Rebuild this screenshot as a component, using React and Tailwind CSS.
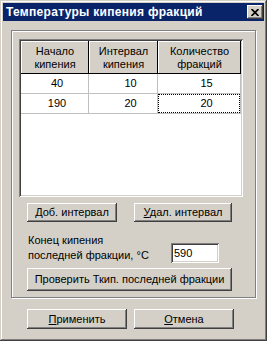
import React from 'react';

const raised =
  'shadow-[inset_-1px_-1px_#404040,inset_1px_1px_#ffffff,inset_-2px_-2px_#808080,inset_2px_2px_#d4d0c8]';
const headerCell =
  'shadow-[inset_-1px_-1px_#000000,inset_1px_1px_#ffffff] flex flex-col items-center justify-center leading-[13px]';

const WinButton = ({ className, children }) => (
  <button
    className={`${raised} bg-[#d4d0c8] flex items-center justify-center text-black text-[11px] ${className}`}
  >
    {children}
  </button>
);

const rows = [
  ['40', '10', '15'],
  ['190', '20', '20'],
];

const App = () => {
  return (
    <div className="w-[267px] h-[341px] bg-[#d4d0c8] p-[3px] flex flex-col text-[11px] text-black font-['Liberation_Sans',Arial,sans-serif] shadow-[inset_-1px_-1px_#404040,inset_1px_1px_#d4d0c8,inset_-2px_-2px_#808080,inset_2px_2px_#ffffff]">
      {/* Title bar */}
      <div className="h-[18px] bg-[#0a246a] flex items-center justify-between pl-[3px] pr-[1px]">
        <span className="text-white font-bold text-[12px] tracking-[0.3px]">Температуры кипения фракций</span>
        <div className={`${raised} bg-[#d4d0c8] w-[16px] h-[14px] flex items-center justify-center`}>
          <svg width="8" height="7" viewBox="0 0 8 7">
            <path d="M0.5 0 L7.5 7 M7.5 0 L0.5 7" stroke="#000" strokeWidth="1.7" />
          </svg>
        </div>
      </div>

      <div className="flex flex-col px-[8px]">
        {/* Group frame */}
        <div className="mt-[9px] w-[245px] h-[268px] border border-[#808080] shadow-[inset_1px_1px_#ffffff,1px_1px_#ffffff] pl-[7px] pt-[8px] flex flex-col">
          {/* Grid */}
          <div className="w-[224px] h-[158px] p-[2px] bg-white shadow-[inset_1px_1px_#808080,inset_-1px_-1px_#ffffff,inset_2px_2px_#404040,inset_-2px_-2px_#d4d0c8]">
            <div className="flex h-[33px] bg-[#d4d0c8]">
              <div className={`${headerCell} w-[68px]`}>
                <span>Начало</span>
                <span>кипения</span>
              </div>
              <div className={`${headerCell} w-[69px]`}>
                <span>Интервал</span>
                <span>кипения</span>
              </div>
              <div className={`${headerCell} w-[83px]`}>
                <span>Количество</span>
                <span>фракций</span>
              </div>
            </div>
            {rows.map((r, i) => (
              <div key={i} className="flex h-[20px]">
                <div className="w-[68px] border-r border-b border-[#c0c0c0] flex items-center justify-center pl-[5px]">
                  {r[0]}
                </div>
                <div className="w-[69px] border-r border-b border-[#c0c0c0] flex items-center justify-center pl-[15px]">
                  {r[1]}
                </div>
                <div className="w-[83px] border-r border-b border-[#c0c0c0] flex items-center justify-center pl-[15px]">
                  {i === 1 ? (
                    <div className="w-[82px] h-[19px] -ml-[15px] pl-[15px] border border-dotted border-black flex items-center justify-center">
                      {r[2]}
                    </div>
                  ) : (
                    r[2]
                  )}
                </div>
              </div>
            ))}
          </div>

          {/* Add / delete buttons */}
          <div className="flex gap-[17px] mt-[6px] ml-[8px]">
            <WinButton className="w-[90px] h-[19px]">
              <span>
                <u>Д</u>об. интервал
              </span>
            </WinButton>
            <WinButton className="w-[98px] h-[19px]">
              <span>
                <u>У</u>дал. интервал
              </span>
            </WinButton>
          </div>

          {/* End of boiling */}
          <div className="flex items-end mt-[11px] ml-[9px]">
            <div className="w-[143px] leading-[15px]">
              <div>Конец кипения</div>
              <div>последней фракции, °C</div>
            </div>
            <div className="w-[48px] h-[20px] bg-white pl-[3px] flex items-center shadow-[inset_1px_1px_#808080,inset_-1px_-1px_#ffffff,inset_2px_2px_#404040,inset_-2px_-2px_#d4d0c8]">
              590
            </div>
          </div>

          <WinButton className="w-[205px] h-[23px] mt-[5px] ml-[8px]">
            Проверить Ткип. последней фракции
          </WinButton>
        </div>

        {/* Bottom buttons */}
        <div className="flex gap-[7px] mt-[11px] ml-[16px]">
          <WinButton className="w-[100px] h-[20px]">
            <span>
              <u>П</u>рименить
            </span>
          </WinButton>
          <WinButton className="w-[100px] h-[20px]">
            <span>
              <u>О</u>тмена
            </span>
          </WinButton>
        </div>
      </div>
    </div>
  );
};

export default App;
